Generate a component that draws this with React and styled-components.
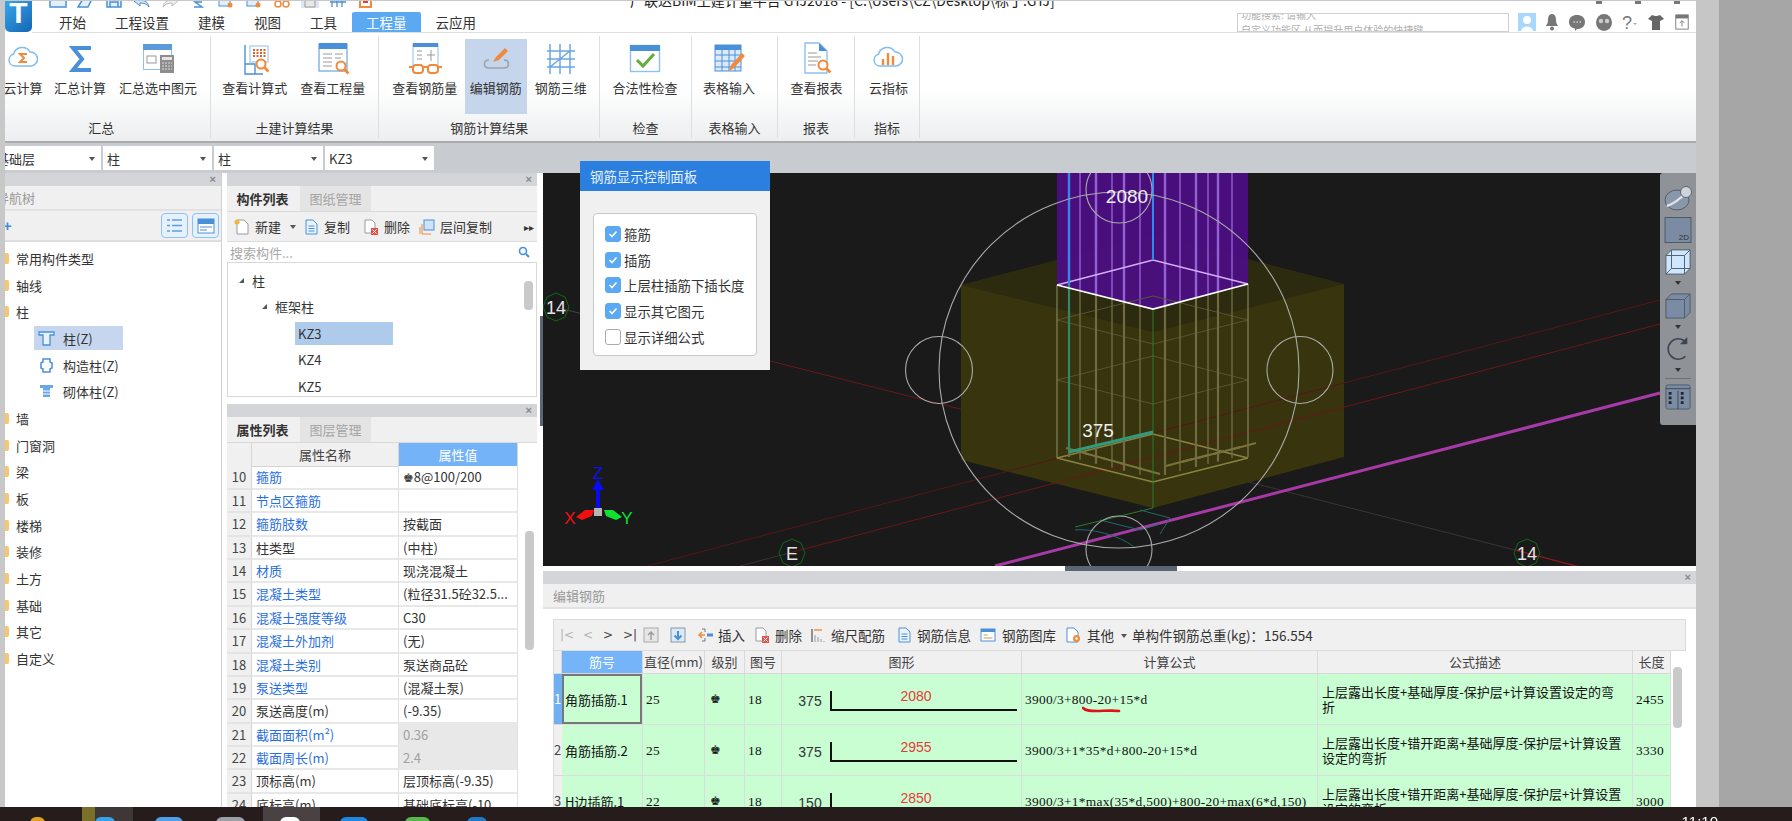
import React from 'react'
import styled, { createGlobalStyle } from 'styled-components'

const BLUE = '#4a90d9'
const SKY = '#8fc0ee'
const ORANGE = '#f08a3c'

const GlobalStyle = createGlobalStyle`
  html, body { margin: 0; padding: 0; background: #a6a6a6; }
  * { box-sizing: border-box; }
  body { font-family: "Noto Sans CJK SC", "Liberation Sans", sans-serif; color: #333; }
`

const Page = styled.div`
  width: 1792px;
  height: 821px;
  overflow: hidden;
  display: flex;
  flex-direction: column;
  filter: blur(0.35px);
`
const Screen = styled.div`
  height: 807px;
  display: flex;
`
const Strip = styled.div`
  width: ${p => p.$w}px;
  background: ${p => p.$bg};
  flex: none;
`
const Window = styled.div`
  width: 1691px;
  height: 807px;
  overflow: hidden;
  background: #fff;
  display: flex;
  flex-direction: column;
  flex: none;
`

/* ---------- top header ---------- */
const Head = styled.div`
  height: 33px;
  display: flex;
  border-top: 1px solid #c8c8c8;
`
const Logo = styled.div`
  width: 27px;
  height: 31px;
  border-radius: 0 0 5px 5px;
  background: linear-gradient(135deg, #38a6ea, #1466b4);
  color: #fff;
  font: bold 30px/24px "Liberation Sans", sans-serif;
  text-align: center;
  flex: none;
  overflow: hidden;
`
const HeadRight = styled.div`
  flex: 1;
  display: flex;
  flex-direction: column;
  border-bottom: 1px solid #dedede;
  min-width: 0;
`
const TitleRow = styled.div`
  height: 12px;
  display: flex;
  overflow: hidden;
  position: relative;
`
const QuickBar = styled.div`
  width: 598px;
  flex: none;
  padding-left: 17px;
  display: flex;
  gap: 10px;
  margin-top: -8px;
`
const QuickIcon = styled.svg`
  width: 18px;
  height: 15px;
  flex: none;
  background: ${p => (p.$on ? '#dce6f4' : 'transparent')};
`
const TitleText = styled.div`
  font-size: 14px;
  line-height: 16px;
  margin-top: -9px;
  white-space: nowrap;
  color: #222;
`
const WinControls = styled.div`
  margin-left: auto;
  width: 100px;
  display: flex;
  justify-content: space-between;
  padding-right: 16px;
`
const WinDot = styled.span`
  width: 6px;
  height: 3px;
  background: #777;
`
const TabRow = styled.div`
  flex: 1;
  display: flex;
  align-items: flex-end;
  padding-left: 12.5px;
  padding-right: 6px;
`
const Tab = styled.div`
  height: 20px;
  padding: 0 14.5px;
  font-size: 13.5px;
  line-height: 20px;
  border-radius: 2px 2px 0 0;
  background: ${p => (p.$on ? '#5aa9f2' : 'transparent')};
  color: ${p => (p.$on ? '#fff' : '#333')};
`
const HeadTools = styled.div`
  margin-left: auto;
  height: 20px;
  display: flex;
  align-items: center;
  gap: 9px;
`
const HelpSearch = styled.div`
  width: 272px;
  height: 19px;
  border: 1px solid #cfcfcf;
  position: relative;
  overflow: hidden;
  font-size: 10px;
  line-height: 12px;
  color: #b0b0b0;
  padding-left: 3px;
  white-space: nowrap;
`
const HelpLine = styled.div`
  margin-top: ${p => p.$top}px;
`
const HeadIcon = styled.svg`
  width: ${p => p.$w || 18}px;
  height: 18px;
  flex: none;
`

/* ---------- ribbon ---------- */
const Ribbon = styled.div`
  height: 110px;
  display: flex;
  background: linear-gradient(#fff 52%, #eceeef 100%);
  border-bottom: 2px solid #a9abad;
`
const Group = styled.div`
  width: ${p => p.$w}px;
  flex: none;
  display: flex;
  flex-direction: column;
  border-right: 1px solid #dcdfe2;
  margin: 3px 0 3px;
`
const GroupButtons = styled.div`
  display: flex;
  padding-top: 3px;
  margin-left: ${p => p.$pad || 0}px;
`
const GroupLabel = styled.div`
  margin-top: auto;
  height: 19px;
  font-size: 13px;
  line-height: 18px;
  text-align: center;
  padding-right: ${p => p.$inset || 0}px;
`
const RibbonButton = styled.div`
  width: ${p => p.$w}px;
  height: 75px;
  flex: none;
  display: flex;
  flex-direction: column;
  align-items: center;
  padding-top: 2px;
  background: ${p => (p.$on ? '#c5d5ec' : 'transparent')};
  span {
    margin-top: 4px;
    font-size: 13px;
    line-height: 18px;
    white-space: nowrap;
  }
`
const RibbonIcon = styled.svg`
  width: 34px;
  height: 34px;
  flex: none;
`

/* ---------- combos ---------- */
const ComboRow = styled.div`
  height: 30px;
  background: #c8cbcf;
  display: flex;
  gap: 2px;
  padding-top: 3px;
  margin-left: -13px;
`
const Combo = styled.div`
  width: 109px;
  height: 24px;
  background: #fff;
  display: flex;
  align-items: center;
  justify-content: space-between;
  padding: 0 6px 0 4px;
  font-size: 13px;
  &::after {
    content: '';
    border: 3.5px solid transparent;
    border-top: 4px solid #555;
    margin-top: 4px;
  }
`

/* ---------- workspace ---------- */
const Workspace = styled.div`
  flex: 1;
  display: flex;
  min-height: 0;
`
const LeftPanel = styled.div`
  width: 217px;
  flex: none;
  border-right: 1px solid #d0d0d0;
  display: flex;
  flex-direction: column;
`
const PanelBar = styled.div`
  height: 13px;
  flex: none;
  background: #d3d5d9;
  color: #888;
  font: bold 11px/13px "Liberation Sans", sans-serif;
  text-align: right;
  padding-right: 5px;
`
const PanelTitle = styled.div`
  height: 25px;
  flex: none;
  background: #f0f0f0;
  border-bottom: 2px solid #e2e2e2;
  font-size: 13px;
  line-height: 24px;
  color: #999;
  padding-left: ${p => p.$pad || 0}px;
  white-space: nowrap;
  overflow: hidden;
  span {
    margin-left: ${p => p.$shift || 0}px;
  }
`
const NavTools = styled.div`
  height: 31px;
  flex: none;
  background: #f0f0f0;
  border-bottom: 2px solid #dedede;
  display: flex;
  align-items: center;
  gap: 4px;
  padding-right: 2px;
  color: #3f8fe0;
  font: bold 15px/1 "Liberation Sans", sans-serif;
`
const NavPlus = styled.span`
  margin-right: auto;
  margin-left: -2px;
`
const NavBtn = styled.div`
  width: 27px;
  height: 25px;
  border: 1px solid #8cc2f5;
  border-radius: 4px;
  background: #e6f1fb;
  display: flex;
  align-items: center;
  justify-content: center;
`
const Tree = styled.div`
  flex: 1;
  padding-top: 3px;
`
const NavRow = styled.div`
  height: 26.7px;
  display: flex;
  align-items: center;
  font-size: 13px;
  padding-left: ${p => p.$indent || 0}px;
`
const Folder = styled.span`
  width: 9px;
  height: 11px;
  margin-left: -5.5px;
  margin-right: 7.5px;
  border-radius: 2px;
  background: #f6c56f;
  flex: none;
`
const NavChip = styled.div`
  width: 89px;
  height: 24px;
  display: flex;
  align-items: center;
  gap: 8px;
  padding-left: 4px;
  background: ${p => (p.$on ? '#c5d6ee' : 'transparent')};
`

const MidColumn = styled.div`
  width: 310px;
  margin-left: 5px;
  flex: none;
  display: flex;
  flex-direction: column;
`
const TabBar = styled.div`
  height: 26px;
  flex: none;
  display: flex;
  gap: 2px;
  background: #f0f0f0;
  border-bottom: 1px solid #d9d9d9;
`
const PanelTab = styled.div`
  width: 71px;
  text-align: center;
  font-size: 13px;
  line-height: 25px;
  font-weight: ${p => (p.$on ? 700 : 400)};
  color: ${p => (p.$on ? '#333' : '#a5a5a5')};
  background: ${p => (p.$on ? '#f0f0f0' : '#e4e4e4')};
`
const CompTools = styled.div`
  height: 30px;
  flex: none;
  background: #f0f0f0;
  border-bottom: 1px solid #dcdcdc;
  display: flex;
  align-items: center;
  padding-left: 7px;
  font-size: 13px;
`
const ToolIcon = styled.svg`
  width: 16px;
  height: 16px;
  flex: none;
`
const ToolLabel = styled.span`
  margin-left: ${p => p.$l ?? 5}px;
  margin-right: ${p => p.$r ?? 9}px;
  white-space: nowrap;
`
const Caret = styled.span`
  border: 3px solid transparent;
  border-top: 4px solid #555;
  margin-top: 4px;
  margin-right: ${p => p.$r || 0}px;
`
const More = styled.span`
  margin-left: auto;
  margin-right: 3px;
  font-size: 10px;
  color: #333;
`
const SearchBox = styled.div`
  height: 21px;
  flex: none;
  border-bottom: 1px solid #d8d8d8;
  display: flex;
  align-items: center;
  justify-content: space-between;
  padding: 0 7px 0 3px;
  font-size: 13px;
  color: #a8a8a8;
`
const CompTree = styled.div`
  height: 134px;
  flex: none;
  position: relative;
  padding-top: 4px;
  border: 1px solid #d8d8d8;
  border-top: 0;
  overflow: hidden;
`
const CompRow = styled.div`
  height: 26.5px;
  display: flex;
  align-items: center;
  font-size: 13px;
  padding-left: ${p => p.$indent}px;
`
const Twist = styled.span`
  width: 0;
  height: 0;
  border-left: 5px solid transparent;
  border-bottom: 5px solid #555;
  margin-right: 8px;
`
const Selected = styled.div`
  width: 98px;
  height: 23px;
  padding-left: 3px;
  line-height: 23px;
  background: ${p => (p.$on ? '#afcbec' : 'transparent')};
`
const Thumb = styled.div`
  position: absolute;
  top: ${p => p.$top}px;
  right: ${p => p.$right}px;
  width: 9px;
  height: ${p => p.$h}px;
  border-radius: 4px;
  background: #c9c9c9;
`
const PropPanel = styled.div`
  margin-top: 7px;
  flex: 1;
  min-height: 0;
  display: flex;
  flex-direction: column;
`
const PropBody = styled.div`
  flex: 1;
  min-height: 0;
  position: relative;
  overflow: hidden;
`
const PropGrid = styled.div`
  width: 291px;
  display: grid;
  grid-template-columns: 25px 147px 119px;
  grid-auto-rows: 23.4px;
  font-size: 13px;
  line-height: 21px;
`
const PropHead = styled.div`
  height: 24px;
  text-align: center;
  line-height: 23px;
  border-right: 1px solid #d5d5d5;
  border-bottom: 1px solid #d5d5d5;
  background: ${p => (p.$on ? '#74b3f7' : '#f0f0f0')};
  color: ${p => (p.$on ? '#fff' : '#444')};
`
const PropNum = styled.div`
  background: #f0f0f0;
  border-bottom: 2px solid #e4e4e4;
  border-right: 1px solid #d5d5d5;
  text-align: center;
  color: #444;
`
const PropName = styled.div`
  padding-left: 4px;
  border-bottom: 2px solid #e8e8e8;
  border-right: 1px solid #e0e0e0;
  color: ${p => (p.$link ? '#2a6fe0' : '#333')};
  white-space: nowrap;
`
const PropValue = styled.div`
  padding-left: 4px;
  border-bottom: 2px solid #e8e8e8;
  border-right: 1px solid #e0e0e0;
  background: ${p => (p.$off ? '#e8e8e8' : '#fff')};
  color: ${p => (p.$off ? '#a0a0a0' : '#333')};
  white-space: nowrap;
  overflow: hidden;
`
const Rebar = styled.span`
  font-family: "DejaVu Sans", sans-serif;
  font-size: ${p => p.$size || 12}px;
`

const Splitter = styled.div`
  width: 6px;
  flex: none;
  padding: 143px 0 0 3px;
  &::before {
    content: '';
    display: block;
    width: 3px;
    height: 110px;
    background: #5b6575;
  }
`

/* ---------- 3d view ---------- */
const RightColumn = styled.div`
  width: 1153px;
  flex: none;
  display: flex;
  flex-direction: column;
`
const Viewport = styled.div`
  height: 393px;
  flex: none;
  position: relative;
  background: #1a1a1a;
`
const Scene = styled.svg`
  display: block;
  width: 1153px;
  height: 393px;
`
const ControlPanel = styled.div`
  position: absolute;
  left: 37px;
  top: -12px;
  width: 190px;
  height: 209px;
  background: #f0f0f0;
`
const ControlHead = styled.div`
  height: 30px;
  background: #2b7fdf;
  color: #e8f1fc;
  font-size: 13.4px;
  line-height: 30px;
  padding-left: 10px;
`
const ControlCard = styled.div`
  margin: 22px 13px 0;
  height: 143px;
  padding-top: 7px;
  background: #fff;
  border: 1px solid #c9c9c9;
  border-radius: 4px;
`
const CheckRow = styled.div`
  height: 25.7px;
  display: flex;
  align-items: center;
  padding-left: 11px;
  gap: 3px;
  font-size: 13.4px;
  white-space: nowrap;
`
const Check = styled.span`
  width: 16px;
  height: 16px;
  border-radius: 3px;
  flex: none;
  display: flex;
  align-items: center;
  justify-content: center;
  background: ${p => (p.$on ? '#5aa9f2' : '#fff')};
  border: 1px solid ${p => (p.$on ? '#5aa9f2' : '#aaa')};
`
const ToolStrip = styled.div`
  position: absolute;
  top: 0;
  right: 0;
  width: 36px;
  height: 252px;
  background: #8f9397;
  border-radius: 3px 0 0 3px;
  display: flex;
  flex-direction: column;
  align-items: center;
  padding-top: 12px;
`
const StripIcon = styled.svg`
  width: 28px;
  height: 26px;
  flex: none;
  margin-bottom: ${p => p.$mb || 0}px;
`
const StripCaret = styled.span`
  border: 3.5px solid transparent;
  border-top: 4px solid #333;
  margin: 6px 0 ${p => p.$last ?? 4.5}px;
`
const StripRule = styled.span`
  width: 26px;
  height: 1px;
  flex: none;
  background: #6d7175;
  margin-bottom: 5px;
`
const SplitRow = styled.div`
  height: 5px;
  flex: none;
  padding-left: 522px;
  &::before {
    content: '';
    display: block;
    width: 112px;
    height: 5px;
    background: #5b6575;
  }
`

/* ---------- rebar editor ---------- */
const EditPanel = styled.div`
  flex: 1;
  min-height: 0;
  display: flex;
  flex-direction: column;
  overflow: hidden;
`
const EditBody = styled.div`
  flex: 1;
  padding: 10px 10px 0;
`
const EditFrame = styled.div`
  border: 1px solid #dcdcdc;
  border-bottom: 0;
`
const EditTools = styled.div`
  height: 31px;
  background: #f0f0f0;
  border-bottom: 1px solid #dcdcdc;
  display: flex;
  align-items: center;
  padding-left: 6px;
  font-size: 13.5px;
`
const Nav = styled.span`
  width: ${p => p.$w}px;
  font: 12px/1 "DejaVu Sans", sans-serif;
  color: ${p => (p.$off ? '#b5b5b5' : '#444')};
  flex: none;
`
const EditTable = styled.div`
  position: relative;
  display: grid;
  grid-template-columns: 8px 81px 62px 40px 37px 240px 296px 315px 38px 15px;
  grid-template-rows: 23px repeat(3, 51px);
  font-size: 13px;
`
const ColHead = styled.div`
  background: ${p => (p.$on ? '#75b4f8' : '#f0f0f0')};
  color: ${p => (p.$on ? '#fff' : '#444')};
  text-align: center;
  line-height: 22px;
  white-space: nowrap;
  border-right: 1px solid #d8d8d8;
  border-bottom: 1px solid #d8d8d8;
  overflow: hidden;
`
const RowIndex = styled.div`
  background: ${p => (p.$on ? '#6fb0f5' : '#f0f0f0')};
  color: ${p => (p.$on ? '#fff' : '#444')};
  border-bottom: 1px solid #d8d8d8;
  font-size: 13px;
  line-height: 50px;
  overflow: hidden;
`
const Cell = styled.div`
  background: #c9fed3;
  border-right: 1px solid #dcdcdc;
  border-bottom: 1px solid #dcdcdc;
  display: flex;
  align-items: center;
  padding: 0 ${p => p.$pr ?? 2}px 0 ${p => p.$pl ?? 3}px;
  line-height: 15px;
  color: #111;
  overflow: hidden;
  ${p => (p.$selected ? 'box-shadow: inset 0 0 0 2px #777;' : '')}
`
const Num = styled.span`
  font-family: "Liberation Serif", serif;
  font-size: 13.4px;
  letter-spacing: 0.3px;
  white-space: nowrap;
`
const ShapeSvg = styled.svg`
  width: 239px;
  height: 50px;
  display: block;
`
const ScrollGap = styled.div`
  background: #fff;
  grid-row: 1 / span 4;
  grid-column: 10;
`
// hand drawn mark somebody left on the screenshot, under "800-20"
const RedMark = styled.svg`
  position: absolute;
  left: 528px;
  top: 55px;
  width: 40px;
  height: 8px;
`

/* ---------- taskbar ---------- */
const Taskbar = styled.div`
  height: 14px;
  flex: none;
  background: #271c1c;
  display: flex;
  overflow: hidden;
`
const TaskSlot = styled.div`
  width: ${p => p.$w}px;
  flex: none;
  background: ${p => p.$bg || 'transparent'};
  padding: 10px 0 0 ${p => p.$pad || 0}px;
  display: flex;
  gap: ${p => p.$gap || 0}px;
`
const TaskPeek = styled.span`
  width: ${p => p.$w}px;
  height: 8px;
  border-radius: 6px 6px 0 0;
  background: ${p => p.$c};
  flex: none;
`
const Clock = styled.div`
  margin-left: auto;
  margin-right: 74px;
  padding-top: 7px;
  color: #fff;
  font: 15px/16px "Liberation Sans", sans-serif;
`

/* ---------- little drawings ---------- */
const Magnifier = ({ x, y }) => (
  <g fill="#fff" stroke={ORANGE} strokeWidth="2">
    <circle cx={x} cy={y} r="4.5" />
    <path d="M0 0l4 4" transform={`translate(${x + 3.5} ${y + 3.5})`} strokeWidth="2.6" />
  </g>
)
const cloud = 'M9 25a6 6 0 0 1-1.5-11.8A9 9 0 0 1 24 11a7 7 0 0 1 1 14z'

const ribbonIcons = {
  cloudSum: (
    <>
      <path d={cloud} fill="none" stroke="#7fbcf0" strokeWidth="1.5" />
      <path d="M21 13h-7l4 4-4 4h7" fill="none" stroke={ORANGE} strokeWidth="2" />
    </>
  ),
  sigma: <path d="M28 7H10l9 11-9 11h18" fill="none" stroke={BLUE} strokeWidth="4" />,
  tableCalc: (
    <>
      <rect x="2.5" y="3.5" width="28" height="25" fill="#fff" stroke={SKY} />
      <rect x="2" y="3" width="29" height="6" fill="#5b9bdc" />
      <rect x="6" y="15" width="9" height="7" fill="none" stroke="#999" />
      <rect x="19" y="14" width="14" height="18" fill="#8d8d8d" />
      <rect x="21" y="16" width="10" height="3" fill="#e4e4e4" />
      <path d="M21 22h10M21 25h10M21 28h10" stroke="#ddd" strokeDasharray="2 1" />
    </>
  ),
  viewCalc: (
    <>
      <path d="M7 4v29h18" fill="none" stroke={BLUE} strokeWidth="1.4" />
      <path d="M7 23h10v10" fill="none" stroke={BLUE} strokeWidth="1.4" />
      <rect x="12" y="5" width="18" height="16" fill="#fff" stroke={SKY} />
      <path d="M15 9h13M15 12h13M15 15h13" stroke="#d9622b" strokeWidth="2" strokeDasharray="2 1.5" />
      <Magnifier x={23} y={23} />
    </>
  ),
  viewQty: (
    <>
      <rect x="3" y="3" width="28" height="27" fill="#fff" stroke={BLUE} />
      <rect x="3" y="2" width="28" height="6" fill={BLUE} />
      <path d="M7 13h9M7 17h9M7 21h9M7 25h9M19 13h8M19 17h6" stroke="#999" />
      <Magnifier x={25} y={25} />
    </>
  ),
  viewBar: (
    <>
      <rect x="5" y="3" width="25" height="23" fill="#fff" stroke={SKY} />
      <rect x="5" y="2" width="25" height="4" fill={BLUE} />
      <path d="M9 10h5M9 14h5M9 18h5M19 14h8M23 9v11" stroke="#999" fill="none" />
      <rect x="5" y="24" width="10" height="8" rx="3" fill="#fff" stroke={ORANGE} strokeWidth="2" />
      <rect x="20" y="24" width="10" height="8" rx="3" fill="#fff" stroke={ORANGE} strokeWidth="2" />
      <path d="M15 26h5M5 26H1M30 26h4" stroke={ORANGE} strokeWidth="2" />
    </>
  ),
  editBar: (
    <>
      <path d="M10 19c-6 0-6 8 0 8h15c6 0 6-8 0-8" fill="none" stroke="#9aa3ad" strokeWidth="1.6" />
      <path d="M14 21l3-5 9-9 3 3-9 9z" fill={ORANGE} />
    </>
  ),
  bar3d: (
    <path
      d="M6 3v30M16 3v30M26 3v30M3 10h28M3 18h28M3 26h28M6 26l10-8M16 18l10-8"
      fill="none"
      stroke="#6aa6e6"
      strokeWidth="1.5"
    />
  ),
  check: (
    <>
      <rect x="2.5" y="4.5" width="29" height="26" fill="#fff" stroke={SKY} strokeWidth="1.4" />
      <rect x="2" y="4" width="30" height="6" fill={BLUE} />
      <path d="M9 19l6 6 11-12" fill="none" stroke="#63ad3c" strokeWidth="3" />
    </>
  ),
  sheet: (
    <>
      <rect x="3" y="4" width="26" height="26" fill="#dbe9f8" stroke={BLUE} />
      <rect x="3" y="4" width="26" height="5" fill={BLUE} />
      <path d="M3 14h26M3 20h26M3 26h26M10 9v21M17 9v21M23 9v21" stroke={BLUE} />
      <path d="M17 30l2-6L30 12l3 3-11 12z" fill={ORANGE} />
    </>
  ),
  report: (
    <>
      <path d="M6 2h14l8 8v22H6z" fill="#fff" stroke={SKY} strokeWidth="1.4" />
      <path d="M20 2l8 8h-8z" fill={BLUE} />
      <path d="M9 12h9M9 16h13M9 20h10M9 24h8" stroke="#999" />
      <Magnifier x={24} y={24} />
    </>
  ),
  cloudBars: (
    <>
      <path d={cloud} fill="none" stroke="#7fbcf0" strokeWidth="1.5" />
      <path d="M12 24v-6M17 24V12M22 24v-9" stroke={ORANGE} strokeWidth="2.4" />
    </>
  )
}

const toolIcons = {
  newDoc: (
    <>
      <path d="M3 1h7l4 4v10H3z" fill="#fff" stroke="#9a9a9a" />
      <circle cx="3" cy="3" r="2.5" fill="#f7b23c" />
    </>
  ),
  copy: (
    <>
      <path d="M3 1h7l4 4v10H3z" fill="#eaf3fc" stroke={BLUE} />
      <path d="M5.500 7h6M5.500 9.500h6M5.500 12h6" stroke={BLUE} />
    </>
  ),
  remove: (
    <>
      <path d="M2 1h7l3 3v10H2z" fill="#fff" stroke="#9a9a9a" />
      <rect x="8" y="9" width="7" height="7" fill="#e5504a" />
      <path d="M9.500 10.500l4 4M13.500 10.500l-4 4" stroke="#fff" />
    </>
  ),
  floorCopy: (
    <>
      <rect x="5" y="1" width="10" height="10" fill="#cfe2f7" stroke={BLUE} />
      <path d="M3 5v10h9" fill="none" stroke={ORANGE} />
      <path d="M1 8v7" stroke={ORANGE} />
    </>
  ),
  up: (
    <>
      <rect x="1" y="1" width="14" height="14" fill="#e6e6e6" stroke="#aaa" />
      <path d="M8 13V5M5 8l3-3 3 3" fill="none" stroke="#999" strokeWidth="1.4" />
    </>
  ),
  down: (
    <>
      <rect x="1" y="1" width="14" height="14" fill="#dbe9f8" stroke="#8a96a3" />
      <path d="M8 4v8M4.500 8.500L8 12l3.500-3.500" fill="none" stroke={BLUE} strokeWidth="2" />
    </>
  ),
  insert: (
    <>
      <path d="M4 2h3M4 14h3M7 2v3M7 11v3" stroke="#777" fill="none" />
      <path d="M7 8H1M4 5L1 8l3 3" fill="none" stroke={ORANGE} strokeWidth="1.5" />
      <rect x="9" y="6.500" width="6" height="3" fill={BLUE} />
    </>
  ),
  ruler: (
    <>
      <path d="M2 2v13" stroke="#666" strokeWidth="1.4" />
      <path d="M4 3h8" stroke={ORANGE} strokeWidth="1.4" />
      <path d="M5 15V8M8 15v-5M11 15v-3M14 15v-1" stroke="#999" />
    </>
  ),
  lib: (
    <>
      <rect x="1" y="2" width="14" height="12" fill="#fff" stroke={BLUE} />
      <rect x="1" y="2" width="14" height="3" fill={BLUE} />
      <path d="M3.500 8h4M3.500 11h9" stroke="#b9a44c" />
    </>
  ),
  other: (
    <>
      <path d="M2 1h7l4 4v10H2z" fill="#fff" stroke={BLUE} />
      <circle cx="11.500" cy="11.500" r="3.500" fill={ORANGE} />
      <circle cx="11.500" cy="11.500" r="1.300" fill="#fff" />
    </>
  )
}

const Tool = ({ name }) => <ToolIcon viewBox="0 0 16 16">{toolIcons[name]}</ToolIcon>

// only the lower part of each quick access icon shows above the tab row
const quickIcons = [
  <rect key="a" x="1" y="1" width="16" height="13" fill="#e3effb" stroke={BLUE} strokeWidth="1.5" />,
  <path key="b" d="M1 14L6 6h9l-4 8z" fill="#e3effb" stroke={BLUE} strokeWidth="1.5" />,
  <path key="c" d="M2 1h14v13H2zM5 9h8v5H5z" fill="#e3effb" stroke={BLUE} strokeWidth="1.5" />,
  <path key="d" d="M1 8l6-4v3c5 0 8 2 9 7-2-3-5-4-9-4v3z" fill="#cfe2f7" stroke={BLUE} />,
  <path key="e" d="M17 8l-6-4v3c-5 0-8 2-9 7 2-3 5-4 9-4v3z" fill="#eee" stroke="#bbb" />,
  <path key="f" d="M13 9l-7 0 7 5H5" fill="none" stroke={BLUE} strokeWidth="1.5" />,
  <g key="g"><rect x="2" y="2" width="11" height="11" fill="#e3effb" stroke={BLUE} /><circle cx="13" cy="12" r="2.500" fill={ORANGE} /></g>,
  <g key="h"><rect x="2" y="2" width="11" height="11" fill="#e3effb" stroke={BLUE} /><circle cx="13" cy="12" r="2.500" fill={ORANGE} /></g>,
  <path key="i" d="M2 11a3 3 0 1 0 6 0 3 3 0 1 0-6 0M10 11a3 3 0 1 0 6 0 3 3 0 1 0-6 0" fill="none" stroke={ORANGE} strokeWidth="1.5" />,
  <path key="j" d="M4 6h10v8H4z" fill="#e8e8e8" stroke="#999" />,
  <path key="k" d="M3 1v13M8 1v13M13 1v13M1 9h16" fill="none" stroke={BLUE} strokeWidth="1.3" />,
  <g key="l"><rect x="3" y="3" width="11" height="11" fill="#fff" stroke={ORANGE} strokeWidth="2" /><path d="M6 9h5" stroke="#d9442b" strokeWidth="2" /></g>
]

/* ---------- data ---------- */
const ribbonGroups = [
  { label: '汇总', w: 205.7, pad: -3, inset: 12, items: [['云计算', 42, 'cloudSum'], ['汇总计算', 72, 'sigma'], ['汇总选中图元', 84, 'tableCalc']] },
  { label: '土建计算结果', w: 168.7, pad: 5, items: [['查看计算式', 78, 'viewCalc'], ['查看工程量', 78, 'viewQty']] },
  { label: '钢筋计算结果', w: 220.6, pad: 5.5, items: [['查看钢筋量', 80, 'viewBar'], ['编辑钢筋', 62, 'editBar', true], ['钢筋三维', 68, 'bar3d']] },
  { label: '检查', w: 92, pad: 5, items: [['合法性检查', 80, 'check']] },
  { label: '表格输入', w: 86, items: [['表格输入', 74, 'sheet']] },
  { label: '报表', w: 77, items: [['查看报表', 77, 'report']] },
  { label: '指标', w: 65, pad: 1, items: [['云指标', 65, 'cloudBars']] }
]
const navFolders1 = ['常用构件类型', '轴线', '柱']
const navFolders2 = ['墙', '门窗洞', '梁', '板', '楼梯', '装修', '土方', '基础', '其它', '自定义']
const propRows = [
  [10, '箍筋', true, '8@100/200', 'rebar'],
  [11, '节点区箍筋', true, ''],
  [12, '箍筋肢数', true, '按截面'],
  [13, '柱类型', false, '(中柱)'],
  [14, '材质', true, '现浇混凝土'],
  [15, '混凝土类型', true, '(粒径31.5砼32.5...'],
  [16, '混凝土强度等级', true, 'C30'],
  [17, '混凝土外加剂', true, '(无)'],
  [18, '混凝土类别', true, '泵送商品砼'],
  [19, '泵送类型', true, '(混凝土泵)'],
  [20, '泵送高度(m)', false, '(-9.35)'],
  [21, '截面面积(m²)', true, '0.36', 'off'],
  [22, '截面周长(m)', true, '2.4', 'off'],
  [23, '顶标高(m)', false, '层顶标高(-9.35)'],
  [24, '底标高(m)', false, '基础底标高(-10']
]
const barRows = [
  { name: '角筋插筋.1', dia: 25, hook: 375, len: 2080, formula: '3900/3+800-20+15*d', desc: '上层露出长度+基础厚度-保护层+计算设置设定的弯折', total: 2455 },
  { name: '角筋插筋.2', dia: 25, hook: 375, len: 2955, formula: '3900/3+1*35*d+800-20+15*d', desc: '上层露出长度+错开距离+基础厚度-保护层+计算设置设定的弯折', total: 3330 },
  { name: 'H边插筋.1', dia: 22, hook: 150, len: 2850, formula: '3900/3+1*max(35*d,500)+800-20+max(6*d,150)', desc: '上层露出长度+错开距离+基础厚度-保护层+计算设置设定的弯折', total: 3000 }
]
const checks = [['箍筋', true], ['插筋', true], ['上层柱插筋下插长度', true], ['显示其它图元', true], ['显示详细公式', false]]

/* ---------- the 3d scene, page coordinates ---------- */
const barsX = [1069, 1080, 1096, 1112, 1124, 1140, 1165, 1180, 1196, 1208, 1218, 1232]
const cage = y => `1057,${y} 1153,${y + 24} 1248,${y} 1153,${y - 24}`
const frontEdge = x => (x < 1153 ? 285 + ((x - 1057) / 96) * 24 : 309 - ((x - 1153) / 95) * 25)
const footEdge = x => (x < 1153 ? 458 + ((x - 1057) / 96) * 24 : 482 - ((x - 1153) / 95) * 24)

function Bubble({ x, y, label }) {
  return (
    <g>
      <polygon
        points={`${x},${y - 14} ${x + 9},${y - 10} ${x + 13},${y} ${x + 9},${y + 10} ${x},${y + 14} ${x - 9},${y + 10} ${x - 13},${y} ${x - 9},${y - 10}`}
        fill="none"
        stroke="#0e6a16"
      />
      <text x={x} y={y + 7} fontSize="18" fill="#e4e4e4" textAnchor="middle" fontFamily="Liberation Sans, sans-serif">{label}</text>
    </g>
  )
}

function SceneView() {
  return (
    <Scene viewBox="543 173 1153 393">
      <path d="M559 308L770 361" stroke="#444" />
      <path d="M770 361L960 409" stroke="#6b1616" />
      <path d="M960 409L1190 467" stroke="#4a2418" />
      <path d="M1190 467L1515 550" stroke="#3a3535" />
      <path d="M1515 550L1580 567" stroke="#8c1a1a" strokeWidth="1.4" />

      <polygon points="961,285 1153,235 1344,284 1344,457 1153,508 961,460" fill="#37340e" />
      <polygon points="961,285 1153,235 1344,284 1153,332" fill="#2c2a0f" />

      <path d="M1660 300L647 566" stroke="#571616" />
      <path d="M1660 324L793 552" stroke="#6b1616" />
      <path d="M793 552L740 566" stroke="#3a3535" />
      <path d="M1660 393L995 566" stroke="#a83aa8" strokeWidth="3" />

      <polygon points="1057,173 1248,173 1248,284 1153,309 1057,285" fill="#4a0f80" fillOpacity="0.97" />
      {barsX.map((x, i) => (
        <path key={x} d={`M${x} 173V${frontEdge(x)}`} stroke="#9560d2" strokeWidth={i % 2 ? 1.4 : 2.4} />
      ))}
      <path d="M1057 285L1153 260L1248 284" fill="none" stroke="#d3aef5" strokeWidth="1.6" />

      {[320, 380, 458].map(y => (
        <polygon key={y} points={cage(y)} fill="none" stroke={y === 458 ? '#8a8444' : '#57542f'} strokeWidth={y === 458 ? 1.4 : 1} />
      ))}
      {barsX.map((x, i) => (
        <path key={x} d={`M${x} ${frontEdge(x)}V${footEdge(x) - 4}`} stroke="#6f6c42" strokeWidth={i % 2 ? 1.4 : 2.2} />
      ))}
      <path d="M1057 285V458M1248 284V457" stroke="#85815c" strokeWidth="1.2" />
      {[0, 1, 2, 3, 4].map(i => (
        <path key={i} d={`M${1066 + i * 18} ${448 + i * 5}l22 6M${1166 + i * 16} ${466 - i * 4}l26 -7`} stroke="#77733e" strokeWidth="2" />
      ))}
      <path d="M1153 309V508L1075 527" fill="none" stroke="#2e7a2e" />
      <path d="M1069 285V452" stroke="#2f8a68" strokeWidth="2" />
      <path d="M1069 452L1153 432" stroke="#2f9a7c" strokeWidth="3" />
      <path d="M1069 173V285M1153 173V260" stroke="#2f8af0" strokeWidth="2" />
      <path d="M1057 285L1153 309L1248 284" fill="none" stroke="#fff" strokeWidth="1.8" />

      <path d="M1100 520l40 10 20 -6M1140 510l30 8 -10 16M1075 530c20 -2 50 8 60 18" fill="none" stroke="#1e6a6a" />

      <g fill="none" stroke="#aaa" strokeWidth="1.1">
        <ellipse cx="1119" cy="370" rx="180" ry="178" />
        <ellipse cx="939" cy="370" rx="33.500" ry="33.500" />
        <ellipse cx="1300" cy="370" rx="33" ry="33.500" />
        <ellipse cx="1119" cy="190" rx="33" ry="33" />
        <ellipse cx="1119" cy="549" rx="33" ry="33" />
      </g>
      <g fill="#eee" fontSize="19" fontFamily="Liberation Sans, sans-serif" textAnchor="middle">
        <text x="1127" y="203">2080</text>
        <text x="1098" y="437">375</text>
      </g>
      <Bubble x={556} y={307} label="14" />
      <Bubble x={792} y={553} label="E" />
      <Bubble x={1527} y={553} label="14" />

      <path d="M598 508V485" stroke="#0a0af0" strokeWidth="4" />
      <polygon points="598,479 592,490 604,490" fill="#0a0af0" />
      <polygon points="576,517 585,510 594,510 592,516 582,520" fill="#f01010" />
      <polygon points="622,517 613,510 604,510 606,516 616,520" fill="#10e030" />
      <rect x="594" y="508" width="8" height="8" fill="#b5b5b5" />
      <g fontFamily="Liberation Sans, sans-serif" fontSize="17">
        <text x="598" y="479" fill="#1010f0" textAnchor="middle">Z</text>
        <text x="570" y="524" fill="#f01010" textAnchor="middle">X</text>
        <text x="627" y="524" fill="#10e030" textAnchor="middle">Y</text>
      </g>
    </Scene>
  )
}

function SideTools() {
  return (
    <ToolStrip>
      <StripIcon viewBox="0 0 28 26" $mb={6}>
        <ellipse cx="13" cy="15" rx="12" ry="10" fill="#8997aa" stroke="#555d68" />
        <path d="M3 21C9 19 17 13 23 7" stroke="#dfe3e8" strokeWidth="2.4" fill="none" />
        <circle cx="22" cy="7" r="5.500" fill="#ccd4dd" stroke="#666" />
      </StripIcon>
      <StripIcon viewBox="0 0 28 26" $mb={6}>
        <rect x="1" y="0.500" width="26" height="25" fill="#7a8ba3" stroke="#4f5a68" />
        <text x="25" y="23" fontSize="8" fill="#333" textAnchor="end" fontFamily="Liberation Sans, sans-serif">2D</text>
      </StripIcon>
      <StripIcon viewBox="0 0 28 28">
        <path d="M1 7l6-6h20v20l-6 6H1z" fill="#cfe6ff" stroke="#4f5a68" />
        <path d="M7 1v20h20M7 21l-6 6M1 7h20v20M21 7l6-6" fill="none" stroke="#4f5a68" />
      </StripIcon>
      <StripCaret />
      <StripIcon viewBox="0 0 28 28">
        <path d="M1 7l6-6h20v20l-6 6H1z" fill="#7a8ba3" stroke="#4f5a68" />
        <path d="M1 7h20v20M21 7l6-6" fill="none" stroke="#4f5a68" />
      </StripIcon>
      <StripCaret />
      <StripIcon viewBox="0 0 28 28">
        <path d="M22 6A11 11 0 1 0 22 22" fill="none" stroke="#3d4654" strokeWidth="1.8" />
        <path d="M24 1v8h-8z" fill="#3d4654" />
      </StripIcon>
      <StripCaret $last={2.5} />
      <StripRule />
      <StripIcon viewBox="0 0 28 28">
        <rect x="1" y="1" width="26" height="26" rx="2" fill="#7a8ba3" stroke="#4f5a68" />
        <path d="M1 5h26M14 7v20" stroke="#3d4654" />
        <path d="M4 10h3M4 15h3M4 20h3M17 10h3M17 15h3M17 20h3" stroke="#20242b" strokeWidth="3" />
      </StripIcon>
    </ToolStrip>
  )
}

function Header() {
  return (
    <Head>
      <Logo>T</Logo>
      <HeadRight>
        <TitleRow>
          <QuickBar>
            {quickIcons.map((icon, i) => (
              <QuickIcon key={i} viewBox="0 0 18 15" $on={i === 9}>{icon}</QuickIcon>
            ))}
          </QuickBar>
          <TitleText>广联达BIM土建计量平台 GTJ2018 - [C:\Users\CZ\Desktop\标丁.GTJ]</TitleText>
          <WinControls><WinDot /><WinDot /><WinDot /></WinControls>
        </TitleRow>
        <TabRow>
          {['开始', '工程设置', '建模', '视图', '工具', '工程量', '云应用'].map(t => (
            <Tab key={t} $on={t === '工程量'}>{t}</Tab>
          ))}
          <HeadTools>
            <HelpSearch>
              <HelpLine $top={-5}>功能搜索: 请输入</HelpLine>
              <HelpLine $top={3}>自定义功能区 从而提升用户体验的快捷键</HelpLine>
            </HelpSearch>
            <HeadIcon viewBox="0 0 18 18">
              <rect width="18" height="18" fill="#a9d6fb" />
              <circle cx="9" cy="7" r="4" fill="#fff" />
              <path d="M3 18c1-6 11-6 12 0z" fill="#fff" />
            </HeadIcon>
            <HeadIcon viewBox="2 0 14 18" $w={14}>
              <path d="M9 1c-3 0-4 3-4 6 0 4-2 5-2 6h12c0-1-2-2-2-6 0-3-1-6-4-6z" fill="#777" />
              <circle cx="9" cy="15.500" r="2" fill="#777" />
            </HeadIcon>
            <HeadIcon viewBox="0 0 18 18">
              <path d="M9 2c4.500 0 8 2.500 8 7s-3.500 7-8 7l-2 2v-2.500C3.500 15 1 12.500 1 9c0-4.500 3.500-7 8-7z" fill="#777" />
              <path d="M5.500 9h1.500M8.500 9h1.500M11.500 9h1.500" stroke="#fff" />
            </HeadIcon>
            <HeadIcon viewBox="0 0 18 18">
              <ellipse cx="9" cy="9.500" rx="8" ry="8.500" fill="#777" />
              <circle cx="6" cy="8" r="2.200" fill="#ccc" />
              <circle cx="12" cy="8" r="2.200" fill="#ccc" />
            </HeadIcon>
            <HeadIcon viewBox="0 0 16 18" $w={16}>
              <text x="5" y="16" fontSize="18" fill="#777" textAnchor="middle" fontFamily="Liberation Sans, sans-serif">?</text>
              <path d="M11 10h4l-2 2z" fill="#aaa" />
            </HeadIcon>
            <HeadIcon viewBox="0 0 18 18">
              <path d="M5 2l3 1h2l3-1 4 4-4 2v9H5V8L1 6z" fill="#666" />
            </HeadIcon>
            <HeadIcon viewBox="0 0 18 18" $w={16}>
              <rect x="2" y="1" width="14" height="16" fill="#fff" stroke="#777" />
              <rect x="2" y="1" width="14" height="4" fill="#777" />
              <path d="M9 14V8M6.500 10L9 7.500 11.500 10" fill="none" stroke="#777" />
            </HeadIcon>
          </HeadTools>
        </TabRow>
      </HeadRight>
    </Head>
  )
}

function RibbonBar() {
  return (
    <Ribbon>
      {ribbonGroups.map(g => (
        <Group key={g.label} $w={g.w}>
          <GroupButtons $pad={g.pad}>
            {g.items.map(([text, w, icon, on]) => (
              <RibbonButton key={text} $w={w} $on={on}>
                <RibbonIcon viewBox="0 0 34 34">{ribbonIcons[icon]}</RibbonIcon>
                <span>{text}</span>
              </RibbonButton>
            ))}
          </GroupButtons>
          <GroupLabel $inset={g.inset}>{g.label}</GroupLabel>
        </Group>
      ))}
    </Ribbon>
  )
}

function NavPanel() {
  return (
    <LeftPanel>
      <PanelBar>×</PanelBar>
      <PanelTitle $shift={-9}><span>导航树</span></PanelTitle>
      <NavTools>
        <NavPlus>+</NavPlus>
        <NavBtn>
          <svg width="17" height="17" viewBox="0 0 17 17">
            <path d="M1 3h3M1 8.500h3M1 14h3M6 3h10M6 8.500h10M6 14h10" stroke="#5aa0e6" strokeWidth="1.400" fill="none" />
          </svg>
        </NavBtn>
        <NavBtn>
          <svg width="18" height="16" viewBox="0 0 18 16">
            <rect x="1" y="1" width="16" height="14" fill="#fff" stroke="#4a90d9" />
            <rect x="1" y="1" width="16" height="5" fill="#4a90d9" />
            <path d="M3 9h12M3 12h7" stroke="#4a90d9" />
          </svg>
        </NavBtn>
      </NavTools>
      <Tree>
        {navFolders1.map(t => (
          <NavRow key={t}><Folder />{t}</NavRow>
        ))}
        <NavRow $indent={29}>
          <NavChip $on>
            <svg width="17" height="17" viewBox="0 0 17 17">
              <path d="M1 2h15v3h-4v10H5V5H1z" fill="#eaf3fc" stroke="#4a90d9" strokeWidth="1.300" />
            </svg>
            柱(Z)
          </NavChip>
        </NavRow>
        <NavRow $indent={29}>
          <NavChip>
            <svg width="17" height="17" viewBox="0 0 17 17">
              <path d="M5 2h7v3l2 1v5l-2 1v3H5v-3l-2-1V6l2-1z" fill="#fff" stroke="#4a90d9" strokeWidth="1.500" />
            </svg>
            构造柱(Z)
          </NavChip>
        </NavRow>
        <NavRow $indent={29}>
          <NavChip>
            <svg width="17" height="17" viewBox="0 0 17 17">
              <path d="M2 2h13v3h-3v9H5V5H2z" fill="#6aa6e6" />
              <path d="M5 8h7M5 11h7" stroke="#fff" />
            </svg>
            砌体柱(Z)
          </NavChip>
        </NavRow>
        {navFolders2.map(t => (
          <NavRow key={t}><Folder />{t}</NavRow>
        ))}
      </Tree>
    </LeftPanel>
  )
}

function ComponentPanel() {
  return (
    <>
      <PanelBar>×</PanelBar>
      <TabBar>
        <PanelTab $on>构件列表</PanelTab>
        <PanelTab>图纸管理</PanelTab>
      </TabBar>
      <CompTools>
        <Tool name="newDoc" />
        <ToolLabel>新建</ToolLabel>
        <Caret $r={7} />
        <Tool name="copy" />
        <ToolLabel $r={13}>复制</ToolLabel>
        <Tool name="remove" />
        <ToolLabel>删除</ToolLabel>
        <Tool name="floorCopy" />
        <ToolLabel>层间复制</ToolLabel>
        <More>▸▸</More>
      </CompTools>
      <SearchBox>
        搜索构件...
        <svg width="12" height="12" viewBox="0 0 12 12">
          <circle cx="5" cy="5" r="3.500" fill="none" stroke="#3f8fe0" strokeWidth="1.600" />
          <path d="M8 8l3 3" stroke="#3f8fe0" strokeWidth="2" />
        </svg>
      </SearchBox>
      <CompTree>
        <CompRow $indent={11}><Twist />柱</CompRow>
        <CompRow $indent={34}><Twist />框架柱</CompRow>
        <CompRow $indent={67}><Selected $on>KZ3</Selected></CompRow>
        <CompRow $indent={67}><Selected>KZ4</Selected></CompRow>
        <CompRow $indent={67}><Selected>KZ5</Selected></CompRow>
        <Thumb $top={18} $right={3} $h={29} />
      </CompTree>
    </>
  )
}

function PropertyPanel() {
  return (
    <PropPanel>
      <PanelBar>×</PanelBar>
      <TabBar>
        <PanelTab $on>属性列表</PanelTab>
        <PanelTab>图层管理</PanelTab>
      </TabBar>
      <PropBody>
        <PropGrid>
          <PropHead />
          <PropHead>属性名称</PropHead>
          <PropHead $on>属性值</PropHead>
          {propRows.map(([n, name, link, value, kind]) => (
            <React.Fragment key={n}>
              <PropNum>{n}</PropNum>
              <PropName $link={link}>{name}</PropName>
              <PropValue $off={kind === 'off'}>
                {kind === 'rebar' && <Rebar>♚</Rebar>}
                {value}
              </PropValue>
            </React.Fragment>
          ))}
        </PropGrid>
        <Thumb $top={88} $right={3} $h={119} />
      </PropBody>
    </PropPanel>
  )
}

function ShapeCell({ hook, len }) {
  return (
    <ShapeSvg viewBox="0 0 239 50">
      <text x="28" y="32" fontSize="14" fill="#333" textAnchor="middle" fontFamily="Liberation Sans, sans-serif">{hook}</text>
      <path d="M49 17V36H235" fill="none" stroke="#111" strokeWidth="2" />
      <text x="134" y="27" fontSize="14" fill="#e63b3b" textAnchor="middle" fontFamily="Liberation Sans, sans-serif">{len}</text>
    </ShapeSvg>
  )
}

function RebarEditor() {
  return (
    <EditPanel>
      <PanelBar>×</PanelBar>
      <PanelTitle $pad={10}>编辑钢筋</PanelTitle>
      <EditBody>
        <EditFrame>
          <EditTools>
            <Nav $w={23} $off>|&lt;</Nav>
            <Nav $w={20} $off>&lt;</Nav>
            <Nav $w={20}>&gt;</Nav>
            <Nav $w={20}>&gt;|</Nav>
            <Tool name="up" />
            <ToolLabel $l={0} $r={11} />
            <Tool name="down" />
            <ToolLabel $l={0} $r={12} />
            <Tool name="insert" />
            <ToolLabel $l={4} $r={9}>插入</ToolLabel>
            <Tool name="remove" />
            <ToolLabel $l={5} $r={8}>删除</ToolLabel>
            <Tool name="ruler" />
            <ToolLabel $l={5} $r={11}>缩尺配筋</ToolLabel>
            <Tool name="copy" />
            <ToolLabel $l={5} $r={9}>钢筋信息</ToolLabel>
            <Tool name="lib" />
            <ToolLabel $l={6} $r={9}>钢筋图库</ToolLabel>
            <Tool name="other" />
            <ToolLabel $l={6} $r={7}>其他</ToolLabel>
            <Caret $r={5} />
            <ToolLabel $l={0}>单构件钢筋总重(kg)：156.554</ToolLabel>
          </EditTools>
          <EditTable>
            <ColHead />
            <ColHead $on>筋号</ColHead>
            <ColHead>直径(mm)</ColHead>
            <ColHead>级别</ColHead>
            <ColHead>图号</ColHead>
            <ColHead>图形</ColHead>
            <ColHead>计算公式</ColHead>
            <ColHead>公式描述</ColHead>
            <ColHead>长度</ColHead>
            <ScrollGap />
            {barRows.map((r, i) => (
              <React.Fragment key={r.name}>
                <RowIndex $on={i === 0}>{i + 1}</RowIndex>
                <Cell $selected={i === 0}>{r.name}</Cell>
                <Cell><Num>{r.dia}</Num></Cell>
                <Cell $pl={5}><Rebar>♚</Rebar></Cell>
                <Cell><Num>18</Num></Cell>
                <Cell $pl={0} $pr={0}><ShapeCell hook={r.hook} len={r.len} /></Cell>
                <Cell $pr={0}><Num>{r.formula}</Num></Cell>
                <Cell $pl={4} $pr={6}>{r.desc}</Cell>
                <Cell><Num>{r.total}</Num></Cell>
              </React.Fragment>
            ))}
            <Thumb $top={16} $right={3} $h={61} />
            <RedMark viewBox="0 0 40 8">
              <path d="M1 2c3 3 8 3 14 3s14-1 22 0" fill="none" stroke="#e0101f" strokeWidth="2.6" strokeLinecap="round" />
            </RedMark>
          </EditTable>
        </EditFrame>
      </EditBody>
    </EditPanel>
  )
}

export default function App() {
  return (
    <Page>
      <GlobalStyle />
      <Screen>
        <Strip $w={5} $bg="#c8c8c8" />
        <Window>
          <Header />
          <RibbonBar />
          <ComboRow>
            <Combo>基础层</Combo>
            <Combo>柱</Combo>
            <Combo>柱</Combo>
            <Combo>KZ3</Combo>
          </ComboRow>
          <Workspace>
            <NavPanel />
            <MidColumn>
              <ComponentPanel />
              <PropertyPanel />
            </MidColumn>
            <Splitter />
            <RightColumn>
              <Viewport>
                <SceneView />
                <ControlPanel>
                  <ControlHead>钢筋显示控制面板</ControlHead>
                  <ControlCard>
                    {checks.map(([text, on]) => (
                      <CheckRow key={text}>
                        <Check $on={on}>
                          {on && (
                            <svg width="10" height="10" viewBox="0 0 10 10">
                              <path d="M1.500 5l2.500 2.500L8.500 2.500" fill="none" stroke="#fff" strokeWidth="1.600" />
                            </svg>
                          )}
                        </Check>
                        {text}
                      </CheckRow>
                    ))}
                  </ControlCard>
                </ControlPanel>
                <SideTools />
              </Viewport>
              <SplitRow />
              <RebarEditor />
            </RightColumn>
          </Workspace>
        </Window>
        <Strip $w={23} $bg="#c6c6c6" />
        <Strip $w={73} $bg="#a6a6a6" />
      </Screen>
      <Taskbar>
        <TaskSlot $w={82} $pad={30}><TaskPeek $w={15} $c="#e0a020" /></TaskSlot>
        <TaskSlot $w={13} $bg="#7a6f28" />
        <TaskSlot $w={38} $bg="#3f3737"><TaskPeek $w={20} $c="#36a3e8" /></TaskSlot>
        <TaskSlot $w={130} $pad={22} $gap={33}>
          <TaskPeek $w={28} $c="#4f9fe8" />
          <TaskPeek $w={29} $c="#9aa0a8" />
        </TaskSlot>
        <TaskSlot $w={57} $bg="#4a4242" $pad={17}><TaskPeek $w={20} $c="#fff" /></TaskSlot>
        <TaskSlot $w={200} $pad={20} $gap={37}>
          <TaskPeek $w={28} $c="#1f88e0" />
          <TaskPeek $w={25} $c="#58b84a" />
          <TaskPeek $w={20} $c="#1f78c8" />
        </TaskSlot>
        <Clock>11:10</Clock>
      </Taskbar>
    </Page>
  )
}
